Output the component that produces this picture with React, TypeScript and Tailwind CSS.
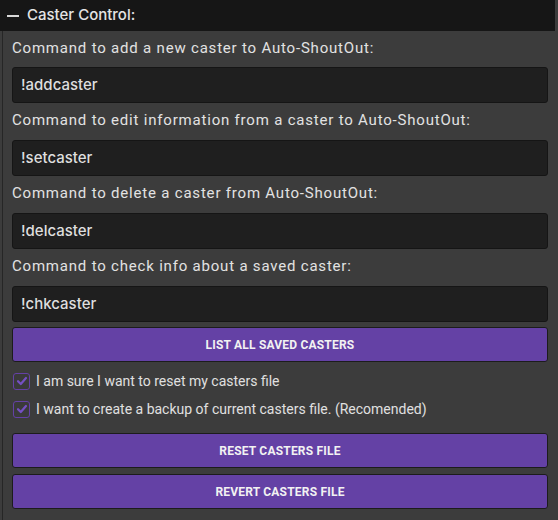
import React from "react";

const labels = [
  { label: "Command to add a new caster to Auto-ShoutOut:", value: "!addcaster" },
  { label: "Command to edit information from a caster to Auto-ShoutOut:", value: "!setcaster" },
  { label: "Command to delete a caster from Auto-ShoutOut:", value: "!delcaster" },
  { label: "Command to check info about a saved caster:", value: "!chkcaster" },
];

function Check() {
  return (
    <span className="w-[17px] h-[17px] rounded-[3px] border-[1.5px] border-[#6441a5] flex items-center justify-center bg-[#3a3a3a]">
      <svg width="12" height="12" viewBox="0 0 12 12">
        <path d="M2 6.2 L4.8 9 L10 3" fill="none" stroke="#7550c4" strokeWidth="2.2" strokeLinecap="round" strokeLinejoin="round" />
      </svg>
    </span>
  );
}

function Btn({ children }: { children: React.ReactNode }) {
  return (
    <button className="w-full h-[35px] bg-[#6441a5] border border-[#1c1c1c] rounded-[3px] text-[#f2f2f2] text-[12px] font-bold tracking-[0.2px] uppercase" style={{ fontFamily: "Roboto, sans-serif" }}>
      {children}
    </button>
  );
}

export default function App() {
  return (
    <div className="w-[558px] h-[520px] bg-[#3c3c3c] overflow-hidden" style={{ fontFamily: "Roboto, sans-serif" }}>
      <div className="w-[555px] h-[31px] bg-[#161616] flex items-center pl-[7px]">
        <span className="w-[12px] h-[2px] bg-[#d8d8d8] mr-[8px]" />
        <span className="text-[#e4e4e4] text-[15px] font-medium" style={{ fontFamily: "Inter, sans-serif" }}>Caster Control:</span>
      </div>
      <div className="ml-[2px] w-[553px] h-[489px] border-l border-[#262626] pl-[9px] pr-[7px] flex flex-col">
        {labels.map((l, i) => (
          <React.Fragment key={i}>
            <div className={(i === 0 ? "h-[36px]" : "h-[37px]") + " pt-[8px] text-[15px] leading-[18px] tracking-[0.8px] text-[#e2e2e2]"}>
              {l.label}
            </div>
            <div className="h-[36px] bg-[#1f1f1f] border border-[#151515] rounded-[3px] flex items-center pl-[8px] text-[15px] text-[#dedede] font-medium" style={{ fontFamily: "Inter, sans-serif" }}>
              {l.value}
            </div>
          </React.Fragment>
        ))}
        <div className="mt-[5px]">
          <Btn>List all saved casters</Btn>
        </div>
        <div className="mt-[5px] h-[28px] flex items-center gap-[6px] pl-[1px] text-[14px] text-[#e0e0e0]">
          <Check />
          <span>I am sure I want to reset my casters file</span>
        </div>
        <div className="h-[28px] flex items-center gap-[6px] pl-[1px] text-[14px] text-[#e0e0e0]">
          <Check />
          <span>I want to create a backup of current casters file. (Recomended)</span>
        </div>
        <div className="mt-[10px]">
          <Btn>Reset casters file</Btn>
        </div>
        <div className="mt-[6px]">
          <Btn>Revert casters file</Btn>
        </div>
      </div>
    </div>
  );
}
